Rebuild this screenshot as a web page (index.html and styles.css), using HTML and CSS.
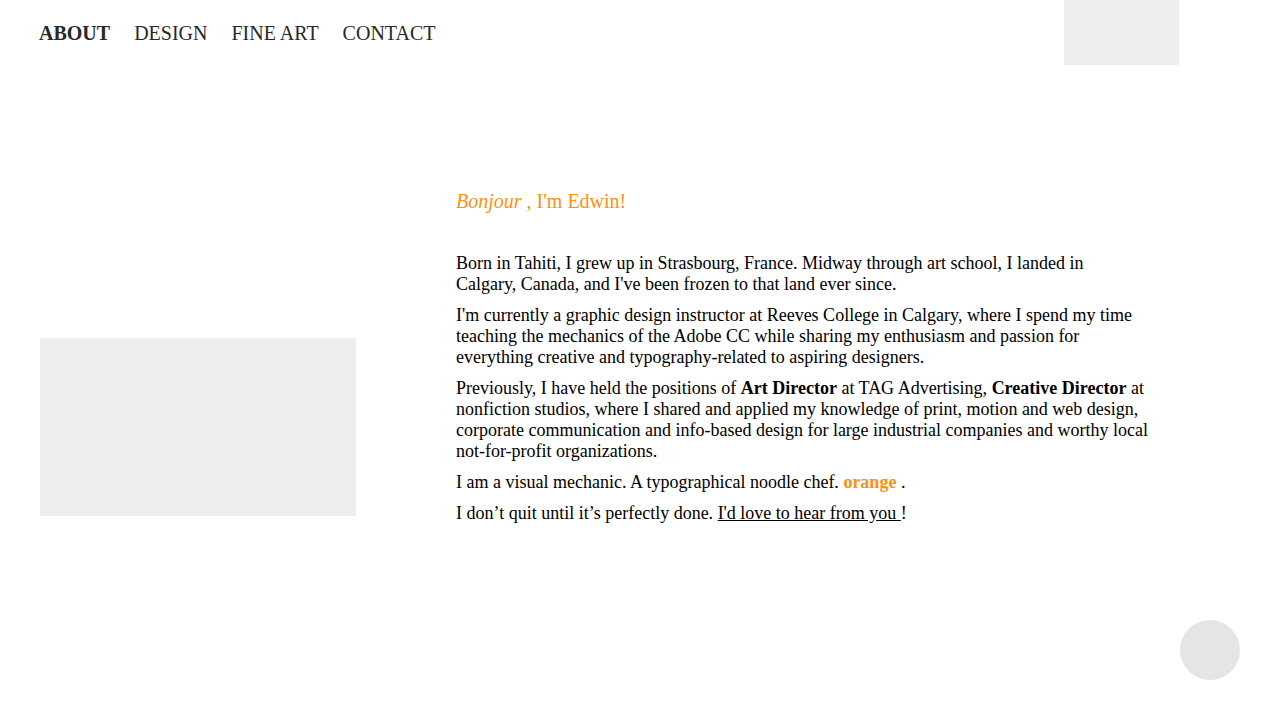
FILE: index.html
```html
<!DOCTYPE html>
<html lang="en">
<head>
<meta charset="utf-8">
<title>About – Edwin</title>
<link rel="stylesheet" href="styles.css">
</head>
<body>
<header class="header">
  <nav class="nav" aria-label="Main">
    <a class="nav-link current" href="#about" aria-current="page">ABOUT</a>
    <a class="nav-link" href="#design">DESIGN</a>
    <a class="nav-link" href="#fine-art">FINE ART</a>
    <a class="nav-link" href="#contact">CONTACT</a>
  </nav>
  <div class="logo"></div>
</header>
<main class="about">
  <div class="portrait"></div>
  <div class="bio">
    <h1 class="greeting"><em>Bonjour</em> , I'm Edwin!</h1>
    <p>Born in Tahiti, I grew up in Strasbourg, France. Midway through art school, I landed in Calgary, Canada, and I've been frozen to that land ever since.</p>
    <p>I'm currently a graphic design instructor at Reeves College in Calgary, where I spend my time teaching the mechanics of the Adobe CC while sharing my enthusiasm and passion for everything creative and typography-related to aspiring designers.</p>
    <p>Previously, I have held the positions of <strong>Art Director</strong> at TAG Advertising, <strong>Creative Director</strong> at nonfiction studios, where I shared and applied my knowledge of print, motion and web design, corporate communication and info-based design for large industrial companies and worthy local not-for-profit organizations.</p>
    <p>I am a visual mechanic. A typographical noodle chef. <strong class="accent">orange</strong> .</p>
    <p>I don’t quit until it’s perfectly done. <a class="mail" href="#contact">I'd love to hear from you </a>!</p>
  </div>
</main>
<button class="to-top" type="button" aria-label="Back to top"></button>
</body>
</html>
```
FILE: styles.css
```css
* {
  box-sizing: border-box;
}

body {
  margin: 0;
  background: #fff;
  color: #000;
  font-family: "Liberation Serif", "Times New Roman", serif;
  font-size: 18px;
  line-height: 21px;
}

.header {
  display: flex;
  justify-content: space-between;
  align-items: flex-start;
  padding: 0 101px 0 39px;
}

.nav {
  display: flex;
  gap: 24px;
  padding-top: 22px;
}

.nav-link {
  color: #282828;
  font-size: 20px;
  line-height: 23px;
  text-decoration: none;
}

.current {
  font-weight: bold;
}

.logo {
  width: 115px;
  height: 65px;
  background: #eee;
}

.about {
  display: flex;
  align-items: center;
  gap: 100px;
  padding: 125px 132px 0 40px;
}

.portrait {
  flex: none;
  width: 316px;
  aspect-ratio: 316 / 178;
  margin-top: 130px;
  background: #eee;
}

.bio {
  flex: 1;
}

.bio p {
  margin: 0 0 10px;
}

.greeting {
  margin: 0 0 40px;
  color: #ff9010;
  font-size: 20px;
  font-weight: normal;
  line-height: 23px;
}

.accent {
  color: #ff9010;
}

.mail {
  color: inherit;
}

.to-top {
  position: fixed;
  right: 40px;
  bottom: 40px;
  width: 60px;
  height: 60px;
  padding: 0;
  border: 0;
  border-radius: 50%;
  background: #e5e5e5;
  cursor: pointer;
}
```
